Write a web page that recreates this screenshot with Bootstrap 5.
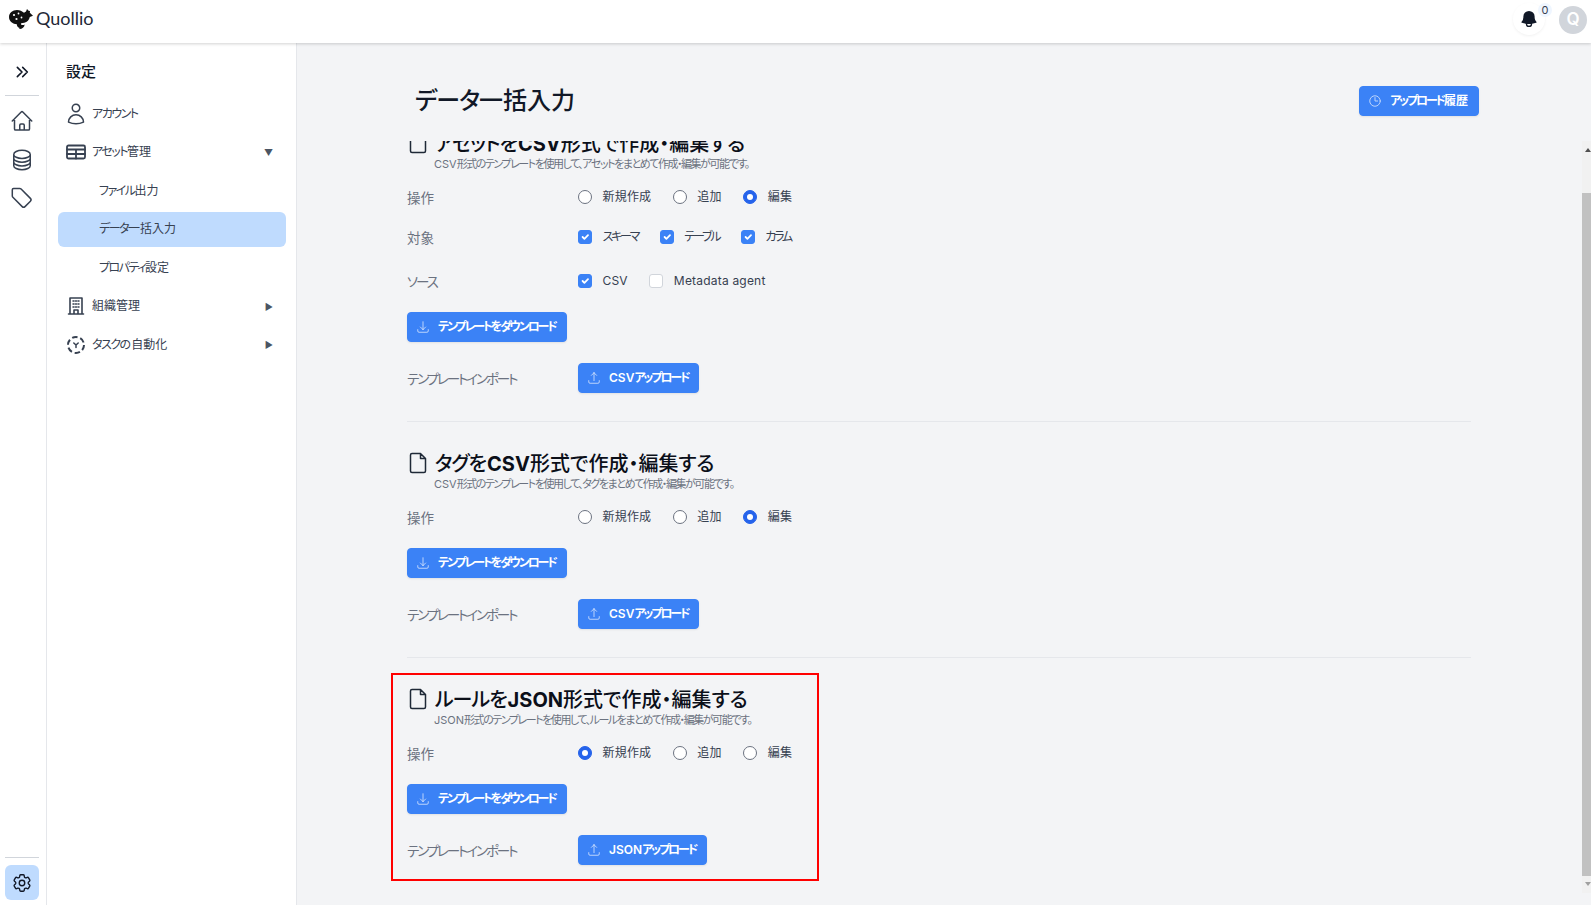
<!DOCTYPE html>
<html lang="ja">
<head>
  <meta charset="UTF-8">
  <meta name="viewport" content="width=device-width, initial-scale=1">
  <title>データ一括入力 - Quollio</title>

  <link href="https://cdn.jsdelivr.net/npm/bootstrap@5.3.3/dist/css/bootstrap.min.css" rel="stylesheet">

  <style>
    html, body {
      height: 100%;
    }
    body {
      font-family: Inter, "Noto Sans CJK JP", sans-serif;
      font-feature-settings: "palt";
      background: #f3f4f6;
      color: #374151;
      overflow: hidden;
    }
    .ic {
      fill: none;
      stroke: currentColor;
      stroke-width: 1.5;
      stroke-linecap: round;
      stroke-linejoin: round;
      flex-shrink: 0;
    }
    /* katakana runs sit much tighter in the reference */
    .kn {
      letter-spacing: -1.5px;
    }

    /* header */
    .top-bar {
      height: 43px;
      background: #fff;
      box-shadow: 0 1px 3px rgba(0, 0, 0, .18);
      position: relative;
      z-index: 5;
      padding: 0 4px 0 9px;
    }
    .logo-wrap {
      padding-bottom: 7px;
    }
    .logo-mark {
      margin-top: 4px;
    }
    .logo-name {
      font-family: Lato, Inter, sans-serif;
      font-size: 18px;
      color: #1f2937;
      margin-left: 3px;
    }
    .bell-wrap {
      width: 32px;
      height: 32px;
      margin-top: 3px;
      margin-right: 14px;
      border-radius: 50%;
      box-shadow: 0 1px 3px rgba(0, 0, 0, .06);
      color: #111827;
      position: relative;
    }
    .bell-count {
      position: absolute;
      top: 0;
      right: -7px;
      width: 14px;
      height: 14px;
      border-radius: 50%;
      background: #eff6ff;
      font-size: 11px;
      line-height: 14px;
      text-align: center;
      color: #374151;
    }
    .avatar {
      width: 28px;
      height: 28px;
      border-radius: 50%;
      background: #d1d5db;
      color: #fff;
      font-size: 17px;
      font-weight: 600;
      margin-top: 6px;
    }

    /* left rail */
    .app-body {
      height: calc(100vh - 43px);
    }
    .icon-rail {
      width: 47px;
      background: #fff;
      border-right: 1px solid #e5e7eb;
      padding: 0 7px 5px 5px;
      color: #374151;
    }
    .rail-top {
      height: 53px;
      padding-top: 5px;
      border-bottom: 1px solid #d1d5db;
      color: #111827;
    }
    .rail-link {
      height: 38.5px;
    }
    .rail-links {
      padding-top: 6px;
    }
    .rail-bottom {
      border-top: 1px solid #d1d5db;
      padding-top: 7px;
    }
    .rail-gear {
      height: 35px;
      background: #bfdbfe;
      border-radius: 6px;
      color: #111827;
    }

    /* settings menu */
    .side-menu {
      width: 250px;
      background: #fff;
      border-right: 1px solid #e5e7eb;
      padding: 0 10px 0 11px;
    }
    .side-title {
      font-size: 15px;
      font-weight: 500;
      color: #111827;
      height: 51.5px;
      padding-left: 8px;
      padding-top: 6.5px;
    }
    .side-item {
      height: 38.5px;
      font-size: 12px;
      padding-left: 8px;
      padding-right: 13px;
    }
    .side-icon {
      width: 20px;
      margin-right: 6px;
    }
    .side-sub {
      height: 35px;
      margin: 1.75px 0;
      font-size: 12px;
      padding-left: 41px;
      border-radius: 6px;
    }
    .side-sub.is-active {
      background: #bfdbfe;
    }
    .tri {
      font-size: 9px;
      color: #4b5563;
      margin-left: auto;
    }

    /* main area */
    .main-area {
      min-width: 0;
    }
    .title-row {
      padding: 43px 112px 0 118px;
      height: 98px;
    }
    .page-title {
      font-size: 24px;
      font-weight: 500;
      line-height: 30px;
      color: #111827;
      margin: 0;
    }
    .page-title .kn {
      letter-spacing: -1px;
    }
    .q-btn {
      --bs-btn-bg: #3b82f6;
      --bs-btn-border-color: #3b82f6;
      --bs-btn-hover-bg: #2563eb;
      --bs-btn-hover-border-color: #2563eb;
      height: 30px;
      font-size: 12px;
      font-weight: 600;
      font-feature-settings: "palt";
      padding: 0 10px 0 8px;
      gap: 8px;
      border-radius: 4px;
      box-shadow: 0 1px 2px rgba(0, 0, 0, .08);
    }
    .q-btn .kn {
      letter-spacing: -2.15px;
    }
    .q-btn svg {
      opacity: .75;
    }
    .pane-wrap {
      height: 752px;
    }
    .scroll-pane {
      overflow: hidden;
      padding: 0 111px 0 110px;
      min-width: 0;
    }
    .fake-bar {
      width: 9px;
      background: #f1f1f1;
    }
    .bar-btn {
      height: 17px;
      padding-left: 3px;
    }
    .bar-btn.is-up {
      padding-top: 7px;
    }
    .bar-btn.is-down {
      padding-top: 6px;
    }
    .bar-arrow {
      width: 0;
      height: 0;
      border-left: 3px solid transparent;
      border-right: 3px solid transparent;
    }
    .is-up .bar-arrow {
      border-bottom: 4px solid #505050;
    }
    .is-down .bar-arrow {
      border-top: 4px solid #a0a0a0;
    }
    .bar-gap {
      height: 35px;
    }
    .bar-thumb {
      background: #c1c1c1;
    }
    .tpl-section {
      padding: 28px 0;
      border-bottom: 1px solid #e5e7eb;
      position: relative;
    }
    .tpl-section:last-child {
      border-bottom: 0;
    }
    .red-frame {
      position: absolute;
      left: -16px;
      top: 15px;
      width: 428px;
      height: 208px;
      border: 2px solid #f00;
      pointer-events: none;
    }
    .tpl-head {
      height: 26px;
      font-size: 20px;
      font-weight: 500;
      line-height: 26px;
      color: #0b0f19;
      gap: 5.5px;
      margin-left: -1.5px;
    }
    .tpl-head span {
      padding-top: 2px;
    }
    .tpl-head b {
      font-weight: 700;
    }
    .tpl-head .kn {
      letter-spacing: -1px;
    }
    .tpl-head svg {
      color: #1f2937;
    }
    .tpl-desc {
      height: 16px;
      font-size: 11px;
      line-height: 16px;
      letter-spacing: -1.45px;
      color: #6b7280;
      padding-left: 27px;
    }
    .desc-latin {
      letter-spacing: 0;
    }
    .opt-row {
      height: 24px;
      margin-top: 13px;
    }
    .opt-row.next-a {
      margin-top: 16px;
    }
    .opt-row.next-b {
      margin-top: 20px;
    }
    .row-name {
      width: 171px;
      font-size: 13.5px;
      padding-top: 2px;
      color: #6b7280;
    }
    .row-name .kn {
      letter-spacing: -2.1px;
    }
    .opt-list {
      gap: 21.5px;
    }
    .opt-item {
      gap: 10.5px;
      font-size: 12px;
      letter-spacing: .2px;
      color: #374151;
      padding: 0;
      margin: 0;
      min-height: 0;
    }
    .opt-item .kn {
      letter-spacing: -2.2px;
    }
    .opt-item .form-check-input {
      width: 14px;
      height: 14px;
      margin: 0;
      float: none;
      background-color: #fff;
      border-color: #6b7280;
    }
    .opt-item .form-check-input[type=checkbox] {
      border-radius: 3px;
      border-color: #d1d5db;
    }
    .opt-item .form-check-input:checked[type=radio] {
      background-color: #2563eb;
      border-color: #2563eb;
    }
    .opt-item .form-check-input:checked[type=checkbox] {
      background-color: #3b82f6;
      border-color: #3b82f6;
    }
    .dl-row {
      margin-top: 19px;
    }
    .import-row {
      margin-top: 21px;
    }
  </style>
</head>

<body>

<svg width="0" height="0" class="position-absolute">
  <symbol id="i-file" viewBox="0 0 24 24"><path d="M6 2.5h8.5l5 5V20a1.5 1.5 0 0 1-1.5 1.5H6A1.5 1.5 0 0 1 4.5 20V4A1.5 1.5 0 0 1 6 2.5zM14.500 2.500v5h5"/></symbol>
  <symbol id="i-down" viewBox="0 0 24 24"><path d="M3 16.5v2.25A2.25 2.25 0 0 0 5.25 21h13.5A2.25 2.25 0 0 0 21 18.75V16.5M16.5 12 12 16.5m0 0L7.5 12m4.5 4.5V3"/></symbol>
  <symbol id="i-up" viewBox="0 0 24 24"><path d="M3 16.5v2.25A2.25 2.25 0 0 0 5.25 21h13.5A2.25 2.25 0 0 0 21 18.75V16.5M16.5 7.5 12 3m0 0L7.5 7.5M12 3v13.5"/></symbol>
</svg>

<!-- Header -->
<header class="top-bar d-flex justify-content-between">
  <div class="logo-wrap d-flex align-items-center">
    <svg class="logo-mark" width="24" height="22" viewBox="0 0 24 22" aria-hidden="true">
      <path fill="#111" d="M0 8C0 4 3.5 1 8 1c3 0 5 1.2 7 2.8l2-1.3L18 0l1.600 1.800 1.400.2-.2 1.800L24 6.700l-3.200 1.200c-.6 2.800-2.500 5-5.500 5.800-1.200.3-2.300.3-3 .6-.7.4-.5 1.300.4 1.600 1.100.3 2.100 0 3-.5-.4 2.800-2.500 4.600-5 4.600-.6 0-.6-.8 0-1-1.700-.4-2.900-1.900-2.900-3.800C4 15 0 12.800 0 8z"/>
      <circle cx="5" cy="6" r="1.1" fill="#fff"/><circle cx="9.5" cy="4.5" r=".9" fill="#fff"/><circle cx="7.5" cy="10" r="1.1" fill="#fff"/><circle cx="12.5" cy="8.5" r=".9" fill="#fff"/>
    </svg>
    <span class="logo-name">Quollio</span>
  </div>
  <div class="d-flex align-items-start">
    <div class="bell-wrap d-flex align-items-center justify-content-center">
      <svg width="20" height="20" viewBox="0 0 24 24" fill="currentColor" aria-hidden="true"><path d="M5.25 9a6.75 6.75 0 0 1 13.5 0v.75c0 2.123.8 4.057 2.118 5.52a.75.75 0 0 1-.297 1.206c-1.544.57-3.16.99-4.831 1.243a3.75 3.75 0 1 1-7.48 0 24.585 24.585 0 0 1-4.831-1.244.75.75 0 0 1-.298-1.205A8.217 8.217 0 0 0 5.25 9.75V9Zm4.502 8.9a2.25 2.25 0 1 0 4.496 0 25.057 25.057 0 0 1-4.496 0Z"/></svg>
      <span class="bell-count">0</span>
    </div>
    <div class="avatar d-flex align-items-center justify-content-center">Q</div>
  </div>
</header>

<div class="app-body d-flex">

  <!-- Icon rail -->
  <aside class="icon-rail d-flex flex-column">
    <div class="rail-top d-flex align-items-center justify-content-center">
      <svg class="ic" width="16" height="16" viewBox="0 0 24 24"><path stroke-width="2.4" d="M13 5l7 7-7 7M5 5l7 7-7 7"/></svg>
    </div>
    <div class="rail-links flex-grow-1">
      <div class="rail-link d-flex align-items-center justify-content-center">
        <svg class="ic" width="24" height="24" viewBox="0 0 24 24"><path d="m2.25 12 8.954-8.955c.44-.439 1.152-.439 1.591 0L21.75 12M4.5 9.75v10.125c0 .621.504 1.125 1.125 1.125H9.75v-4.875c0-.621.504-1.125 1.125-1.125h2.25c.621 0 1.125.504 1.125 1.125V21h4.125c.621 0 1.125-.504 1.125-1.125V9.75M8.25 21h8.25"/></svg>
      </div>
      <div class="rail-link d-flex align-items-center justify-content-center">
        <svg class="ic" width="24" height="24" viewBox="0 0 24 24"><path d="M20.25 6.375c0 2.278-3.694 4.125-8.25 4.125S3.75 8.653 3.75 6.375m16.5 0c0-2.278-3.694-4.125-8.25-4.125S3.75 4.097 3.75 6.375m16.5 0v11.25c0 2.278-3.694 4.125-8.25 4.125s-8.25-1.847-8.25-4.125V6.375m16.5 0v3.75m-16.5-3.75v3.75m16.5 0v3.75C20.25 16.153 16.556 18 12 18s-8.25-1.847-8.25-4.125v-3.75m16.5 0c0 2.278-3.694 4.125-8.25 4.125s-8.25-1.847-8.25-4.125"/></svg>
      </div>
      <div class="rail-link d-flex align-items-center justify-content-center">
        <svg class="ic" width="24" height="24" viewBox="0 0 24 24"><path d="M3.5 2.5h6.2a2 2 0 0 1 1.4.6l9.3 9.3a2 2 0 0 1 0 2.8l-5.4 5.4a2 2 0 0 1-2.8 0l-9.3-9.3a2 2 0 0 1-.6-1.4V3.7a1.2 1.2 0 0 1 1.2-1.2z"/></svg>
      </div>
    </div>
    <div class="rail-bottom">
      <div class="rail-gear d-flex align-items-center justify-content-center">
        <svg class="ic" width="22" height="22" viewBox="0 0 24 24"><path d="M9.594 3.94c.09-.542.56-.94 1.11-.94h2.593c.55 0 1.02.398 1.11.94l.213 1.281c.063.374.313.686.645.87.074.04.147.083.22.127.325.196.72.257 1.075.124l1.217-.456a1.125 1.125 0 0 1 1.37.49l1.296 2.247a1.125 1.125 0 0 1-.26 1.431l-1.003.827c-.293.241-.438.613-.43.992a7.723 7.723 0 0 1 0 .255c-.008.378.137.75.43.991l1.004.827c.424.35.534.955.26 1.43l-1.298 2.247a1.125 1.125 0 0 1-1.369.491l-1.217-.456c-.355-.133-.75-.072-1.076.124a6.47 6.47 0 0 1-.22.128c-.331.183-.581.495-.644.869l-.213 1.281c-.09.543-.56.94-1.11.94h-2.594c-.55 0-1.019-.398-1.11-.94l-.213-1.281c-.062-.374-.312-.686-.644-.87a6.52 6.52 0 0 1-.22-.127c-.325-.196-.72-.257-1.076-.124l-1.217.456a1.125 1.125 0 0 1-1.369-.49l-1.297-2.247a1.125 1.125 0 0 1 .26-1.431l1.004-.827c.292-.24.437-.613.43-.991a6.932 6.932 0 0 1 0-.255c.007-.38-.138-.751-.43-.992l-1.004-.827a1.125 1.125 0 0 1-.26-1.43l1.297-2.247a1.125 1.125 0 0 1 1.37-.491l1.216.456c.356.133.751.072 1.076-.124.072-.044.146-.086.22-.128.332-.183.582-.495.644-.869l.214-1.28Z"/><path d="M15 12a3 3 0 1 1-6 0 3 3 0 0 1 6 0Z"/></svg>
      </div>
    </div>
  </aside>

  <!-- Settings menu -->
  <nav class="side-menu d-flex flex-column">
    <div class="side-title d-flex align-items-center">設定</div>
    <div class="side-item d-flex align-items-center">
      <div class="side-icon d-flex justify-content-center">
        <svg class="ic" width="24" height="24" viewBox="0 0 24 24"><path d="M15.75 6a3.75 3.75 0 1 1-7.5 0 3.75 3.75 0 0 1 7.5 0ZM4.501 20.118a7.5 7.5 0 0 1 14.998 0A17.933 17.933 0 0 1 12 21.75c-2.676 0-5.216-.584-7.499-1.632Z"/></svg>
      </div>
      <span class="kn">アカウント</span>
    </div>
    <div class="side-item d-flex align-items-center">
      <div class="side-icon d-flex justify-content-center">
        <svg class="ic" width="20" height="20" viewBox="0 0 20 20"><rect x="1" y="3.5" width="18" height="13" rx="1.5" stroke-width="1.8"/><path stroke-width="1.8" d="M1 7.5h18M1 12h18M10 7.5v9"/></svg>
      </div>
      <span><span class="kn">アセット</span>管理</span>
      <span class="tri">▼</span>
    </div>
    <div class="side-sub d-flex align-items-center"><span><span class="kn">ファイル</span>出力</span></div>
    <div class="side-sub is-active d-flex align-items-center"><span><span class="kn">データ</span>一括入力</span></div>
    <div class="side-sub d-flex align-items-center"><span><span class="kn">プロパティ</span>設定</span></div>
    <div class="side-item d-flex align-items-center">
      <div class="side-icon d-flex justify-content-center">
        <svg class="ic" width="20" height="20" viewBox="0 0 20 20"><path stroke-width="1.6" d="M4 2h12v16H4zM2.5 18h15M8 18v-4h4v4"/><path stroke-width="1.5" d="M7 5h1M9.5 5h1M12 5h1M7 8h1M9.5 8h1M12 8h1M7 11h1M9.5 11h1M12 11h1"/></svg>
      </div>
      組織管理
      <span class="tri">▶</span>
    </div>
    <div class="side-item d-flex align-items-center">
      <div class="side-icon d-flex justify-content-center">
        <svg class="ic" width="20" height="20" viewBox="0 0 20 20"><circle cx="10" cy="10" r="8" stroke-width="2" stroke-linecap="butt" stroke-dasharray="5.5 2.88"/><path stroke-width="1.5" d="M7.8 8 10 10l2.200-2M10 10v2.600"/></svg>
      </div>
      <span><span class="kn">タスク</span>の自動化</span>
      <span class="tri">▶</span>
    </div>
  </nav>

  <!-- Main -->
  <main class="main-area flex-grow-1">
    <div class="title-row d-flex justify-content-between align-items-start">
      <h1 class="page-title"><span class="kn">データ</span>一括入力</h1>
      <button type="button" class="btn btn-primary q-btn d-inline-flex align-items-center">
        <svg class="ic" width="14" height="14" viewBox="0 0 24 24"><path d="M12 6v6h4.5m4.5 0a9 9 0 1 1-18 0 9 9 0 0 1 18 0Z"/></svg>
        <span><span class="kn">アップロード</span>履歴</span>
      </button>
    </div>

    <div class="pane-wrap d-flex">
      <div class="scroll-pane flex-grow-1" id="scrollPane">

        <section class="tpl-section">
          <div class="tpl-head d-flex align-items-center">
            <svg class="ic" width="24" height="24"><use href="#i-file"/></svg>
            <span><span class="kn">アセット</span>を<b>CSV</b>形式で作成・編集する</span>
          </div>
          <div class="tpl-desc"><span class="desc-latin">CSV</span>形式のテンプレートを使用して、アセットをまとめて作成・編集が可能です。</div>
          <div class="opt-row d-flex align-items-center">
            <div class="row-name">操作</div>
            <div class="opt-list d-flex">
              <label class="opt-item d-flex align-items-center"><input class="form-check-input" type="radio" name="op1">新規作成</label>
              <label class="opt-item d-flex align-items-center"><input class="form-check-input" type="radio" name="op1">追加</label>
              <label class="opt-item d-flex align-items-center"><input class="form-check-input" type="radio" name="op1" checked>編集</label>
            </div>
          </div>
          <div class="opt-row next-a d-flex align-items-center">
            <div class="row-name">対象</div>
            <div class="opt-list d-flex">
              <label class="opt-item d-flex align-items-center"><input class="form-check-input" type="checkbox" checked><span class="kn">スキーマ</span></label>
              <label class="opt-item d-flex align-items-center"><input class="form-check-input" type="checkbox" checked><span class="kn">テーブル</span></label>
              <label class="opt-item d-flex align-items-center"><input class="form-check-input" type="checkbox" checked><span class="kn">カラム</span></label>
            </div>
          </div>
          <div class="opt-row next-b d-flex align-items-center">
            <div class="row-name"><span class="kn">ソース</span></div>
            <div class="opt-list d-flex">
              <label class="opt-item d-flex align-items-center"><input class="form-check-input" type="checkbox" checked>CSV</label>
              <label class="opt-item d-flex align-items-center"><input class="form-check-input" type="checkbox">Metadata agent</label>
            </div>
          </div>
          <div class="dl-row">
            <button type="button" class="btn btn-primary q-btn d-inline-flex align-items-center">
              <svg class="ic" width="14" height="14"><use href="#i-down"/></svg>
              <span class="kn">テンプレートをダウンロード</span>
            </button>
          </div>
          <div class="import-row d-flex align-items-center">
            <div class="row-name"><span class="kn">テンプレートインポート</span></div>
            <button type="button" class="btn btn-primary q-btn d-inline-flex align-items-center">
              <svg class="ic" width="14" height="14"><use href="#i-up"/></svg>
              <span>CSV<span class="kn">アップロード</span></span>
            </button>
          </div>
        </section>

        <section class="tpl-section">
          <div class="tpl-head d-flex align-items-center">
            <svg class="ic" width="24" height="24"><use href="#i-file"/></svg>
            <span><span class="kn">タグ</span>を<b>CSV</b>形式で作成・編集する</span>
          </div>
          <div class="tpl-desc"><span class="desc-latin">CSV</span>形式のテンプレートを使用して、タグをまとめて作成・編集が可能です。</div>
          <div class="opt-row d-flex align-items-center">
            <div class="row-name">操作</div>
            <div class="opt-list d-flex">
              <label class="opt-item d-flex align-items-center"><input class="form-check-input" type="radio" name="op2">新規作成</label>
              <label class="opt-item d-flex align-items-center"><input class="form-check-input" type="radio" name="op2">追加</label>
              <label class="opt-item d-flex align-items-center"><input class="form-check-input" type="radio" name="op2" checked>編集</label>
            </div>
          </div>
          <div class="dl-row">
            <button type="button" class="btn btn-primary q-btn d-inline-flex align-items-center">
              <svg class="ic" width="14" height="14"><use href="#i-down"/></svg>
              <span class="kn">テンプレートをダウンロード</span>
            </button>
          </div>
          <div class="import-row d-flex align-items-center">
            <div class="row-name"><span class="kn">テンプレートインポート</span></div>
            <button type="button" class="btn btn-primary q-btn d-inline-flex align-items-center">
              <svg class="ic" width="14" height="14"><use href="#i-up"/></svg>
              <span>CSV<span class="kn">アップロード</span></span>
            </button>
          </div>
        </section>

        <section class="tpl-section">
          <div class="red-frame"></div>
          <div class="tpl-head d-flex align-items-center">
            <svg class="ic" width="24" height="24"><use href="#i-file"/></svg>
            <span><span class="kn">ルール</span>を<b>JSON</b>形式で作成・編集する</span>
          </div>
          <div class="tpl-desc"><span class="desc-latin">JSON</span>形式のテンプレートを使用して、ルールをまとめて作成・編集が可能です。</div>
          <div class="opt-row d-flex align-items-center">
            <div class="row-name">操作</div>
            <div class="opt-list d-flex">
              <label class="opt-item d-flex align-items-center"><input class="form-check-input" type="radio" name="op3" checked>新規作成</label>
              <label class="opt-item d-flex align-items-center"><input class="form-check-input" type="radio" name="op3">追加</label>
              <label class="opt-item d-flex align-items-center"><input class="form-check-input" type="radio" name="op3">編集</label>
            </div>
          </div>
          <div class="dl-row">
            <button type="button" class="btn btn-primary q-btn d-inline-flex align-items-center">
              <svg class="ic" width="14" height="14"><use href="#i-down"/></svg>
              <span class="kn">テンプレートをダウンロード</span>
            </button>
          </div>
          <div class="import-row d-flex align-items-center">
            <div class="row-name"><span class="kn">テンプレートインポート</span></div>
            <button type="button" class="btn btn-primary q-btn d-inline-flex align-items-center">
              <svg class="ic" width="14" height="14"><use href="#i-up"/></svg>
              <span>JSON<span class="kn">アップロード</span></span>
            </button>
          </div>
        </section>

      </div>

      <!-- scrollbar as the screenshot shows it -->
      <div class="fake-bar d-flex flex-column">
        <div class="bar-btn is-up"><div class="bar-arrow"></div></div>
        <div class="bar-gap"></div>
        <div class="bar-thumb flex-grow-1"></div>
        <div class="bar-btn is-down"><div class="bar-arrow"></div></div>
      </div>
    </div>
  </main>
</div>

<script>
// the screenshot is taken scrolled to the bottom of the list
const pane = document.getElementById('scrollPane');
pane.scrollTop = pane.scrollHeight;
</script>
<script src="https://cdn.jsdelivr.net/npm/bootstrap@5.3.3/dist/js/bootstrap.bundle.min.js"></script>
</body>
</html>
